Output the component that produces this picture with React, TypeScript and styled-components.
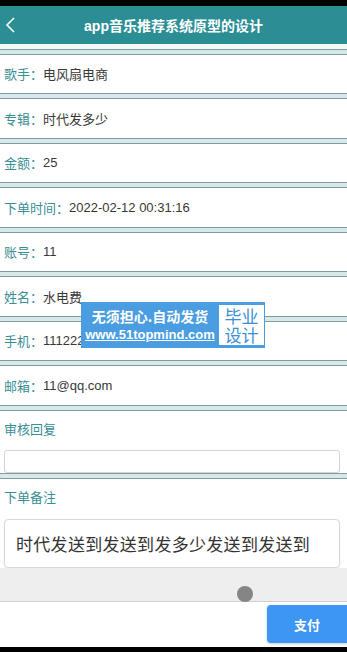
import React from "react";
import styled, { createGlobalStyle } from "styled-components";

const Global = createGlobalStyle`
  html, body { margin: 0; padding: 0; background: #fff; overflow: hidden; }
  body { font-family: "Liberation Sans", "Noto Sans CJK SC", sans-serif; }
  * { box-sizing: border-box; }
`;

const Page = styled.div`
  position: relative;
  width: 347px;
  height: 652px;
  display: flex;
  flex-direction: column;
  background: #fff;
  overflow: hidden;
`;

const BlackBar = styled.div<{ $h: number }>`
  height: ${(p) => p.$h}px;
  background: #000;
  flex: none;
`;

const Header = styled.div`
  height: 38px;
  flex: none;
  background: #2b8e95;
  display: flex;
  align-items: center;
  justify-content: center;
  position: relative;
  color: #fff;
  font-weight: bold;
  font-size: 14px;
`;

const Back = styled.svg`
  position: absolute;
  left: 4px;
  top: 10px;
`;

const Gap = styled.div<{ $h: number }>`
  height: ${(p) => p.$h}px;
  flex: none;
  background: #f3f9f9;
`;

const Separator = styled.div`
  height: 6px;
  flex: none;
  background: #d6e8e9;
  border-top: 1px solid #7f9d9f;
  border-bottom: 1px solid #7f9d9f;
`;

const Row = styled.div`
  height: 38.5px;
  flex: none;
  display: flex;
  align-items: center;
  padding-left: 4px;
  font-size: 13px;
  color: #383838;
  background: #fff;
`;

const Label = styled.span`
  color: #3a8e94;
`;

const Section = styled.div<{ $pt: number }>`
  flex: none;
  display: flex;
  flex-direction: column;
  padding: ${(p) => p.$pt}px 7px 0 4px;
  background: #fff;
`;

const SectionLabel = styled.div`
  font-size: 13px;
  line-height: 18px;
  color: #3a8e94;
`;

const InputBox = styled.div`
  margin-top: 11px;
  height: 23px;
  border: 1px solid #d4d4d4;
  border-radius: 3px;
  background: #fff;
`;

const TextBox = styled.div`
  margin-top: 12px;
  height: 49px;
  border: 1px solid #d8d8d8;
  border-radius: 4px;
  background: #fff;
  display: flex;
  align-items: center;
  padding-left: 11px;
  font-size: 17px;
  color: #333;
  letter-spacing: 0.3px;
  box-shadow: 0 1px 2px rgba(0, 0, 0, 0.08);
`;

const GrayArea = styled.div`
  height: 34px;
  flex: none;
  background: #eeeeee;
  border-bottom: 1px solid #cfcfcf;
`;

const BottomBar = styled.div`
  flex: 1;
  display: flex;
  align-items: center;
  justify-content: flex-end;
  background: #fff;
`;

const PayButton = styled.div`
  width: 80px;
  height: 38px;
  background: #3d95f4;
  border-radius: 4px 0 0 4px;
  color: #fff;
  font-size: 13px;
  font-weight: bold;
  display: flex;
  align-items: center;
  justify-content: center;
  box-shadow: 0 1px 3px rgba(0, 0, 0, 0.2);
`;

const Dot = styled.div`
  position: absolute;
  left: 237px;
  top: 586px;
  width: 16px;
  height: 16px;
  border-radius: 50%;
  background: #858585;
`;

const Watermark = styled.div`
  position: absolute;
  left: 81px;
  top: 302px;
  width: 184px;
  height: 46px;
  background: #4a9de0;
  display: flex;
  align-items: center;
  padding: 0 3px 0 3px;
  gap: 3px;
`;

const WmLeft = styled.div`
  flex: none;
  width: 132px;
  display: flex;
  flex-direction: column;
  color: #fff;
  font-weight: bold;
  align-items: center;
`;

const WmLine1 = styled.div`
  font-size: 14px;
  line-height: 20px;
  white-space: nowrap;
  font-family: "Noto Sans CJK SC", sans-serif;
`;

const WmLine2 = styled.div`
  font-size: 13px;
  line-height: 18px;
  white-space: nowrap;
  text-decoration: underline;
  font-family: "Liberation Sans", sans-serif;
`;

const WmBox = styled.div`
  flex: none;
  width: 45px;
  height: 40px;
  background: #fff;
  color: #3b8fd8;
  font-size: 17px;
  line-height: 19px;
  display: flex;
  flex-direction: column;
  align-items: center;
  justify-content: center;
  white-space: nowrap;
  font-family: "Noto Sans CJK SC", sans-serif;
`;

const rows: [string, string][] = [
  ["歌手：", "电风扇电商"],
  ["专辑：", "时代发多少"],
  ["金额：", "25"],
  ["下单时间：", "2022-02-12 00:31:16"],
  ["账号：", "11"],
  ["姓名：", "水电费"],
  ["手机：", "11122233344"],
  ["邮箱：", "11@qq.com"],
];

export default function App() {
  return (
    <Page>
      <Global />
      <BlackBar $h={6} />
      <Header>
        <Back width="14" height="18" viewBox="0 0 14 18">
          <path d="M10 2 L3 9 L10 16" fill="none" stroke="#fff" strokeWidth="1.6" />
        </Back>
        app音乐推荐系统原型的设计
      </Header>
      <Gap $h={4.5} />
      <Separator />
      {rows.map(([l, v]) => (
        <React.Fragment key={l}>
          <Row>
            <Label>{l}</Label>
            {v}
          </Row>
          <Separator />
        </React.Fragment>
      ))}
      <Section $pt={10}>
        <SectionLabel>审核回复</SectionLabel>
        <InputBox />
      </Section>
      <Separator />
      <Section $pt={10}>
        <SectionLabel>下单备注</SectionLabel>
        <TextBox>时代发送到发送到发多少发送到发送到</TextBox>
      </Section>
      <GrayArea />
      <BottomBar>
        <PayButton>支付</PayButton>
      </BottomBar>
      <BlackBar $h={5} />
      <Dot />
      <Watermark>
        <WmLeft>
          <WmLine1>无须担心.自动发货</WmLine1>
          <WmLine2>www.51topmind.com</WmLine2>
        </WmLeft>
        <WmBox>
          <span>毕业</span>
          <span>设计</span>
        </WmBox>
      </Watermark>
    </Page>
  );
}
